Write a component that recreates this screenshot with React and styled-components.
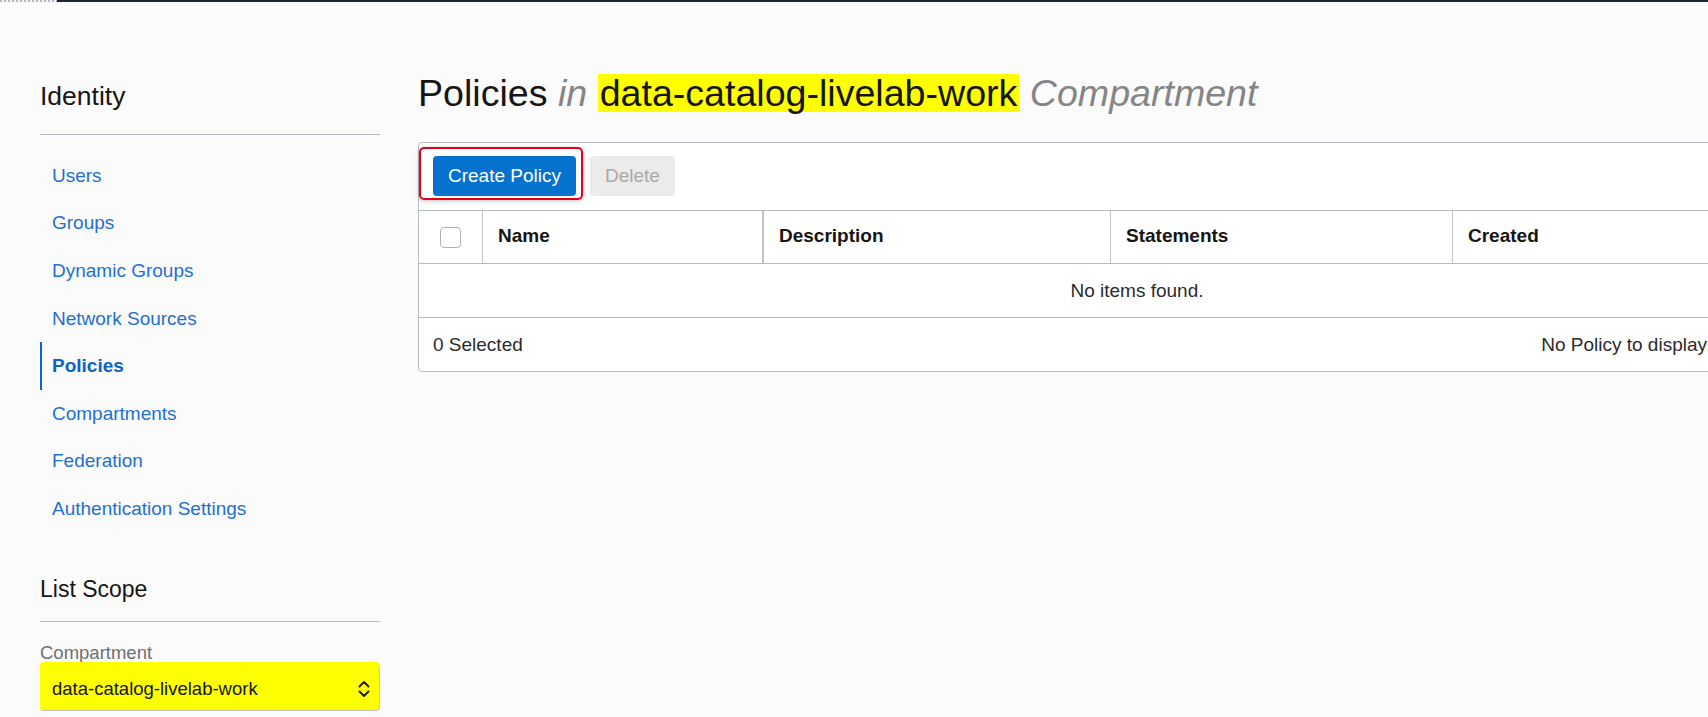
import React from 'react'
import styled, { createGlobalStyle } from 'styled-components'

const GlobalStyle = createGlobalStyle`
    body {
        margin: 0;
        background: #fbfbfb;
        font-family: "Liberation Sans", Arial, sans-serif;
        color: #161513;
        overflow: hidden;
    }
`

const navItems = [
    'Users',
    'Groups',
    'Dynamic Groups',
    'Network Sources',
    'Policies',
    'Compartments',
    'Federation',
    'Authentication Settings',
]

const columns = ['Name', 'Description', 'Statements', 'Created']

function Chevron() {
    return (
        <svg width="14" height="20" viewBox="0 0 14 20" fill="none">
            <path d="M2.5 7.5 L7 3 L11.5 7.5" stroke="#222" strokeWidth="2" strokeLinecap="round" strokeLinejoin="round" />
            <path d="M2.5 12.5 L7 17 L11.5 12.5" stroke="#222" strokeWidth="2" strokeLinecap="round" strokeLinejoin="round" />
        </svg>
    )
}

function App() {
    return (
        <Page>
            <GlobalStyle />
            <TopBar>
                <Dots />
            </TopBar>
            <Layout>
                <Sidebar>
                    <SideHeading size={26.5} lh={30} top={79} pad={23}>Identity</SideHeading>
                    <NavList>
                        {navItems.map((item) => (
                            <NavItem key={item} active={item === 'Policies'}>{item}</NavItem>
                        ))}
                    </NavList>
                    <SideHeading size={23} lh={28} top={42} pad={18}>List Scope</SideHeading>
                    <FieldLabel>Compartment</FieldLabel>
                    <SelectBox>
                        <span>data-catalog-livelab-work</span>
                        <Chevron />
                    </SelectBox>
                </Sidebar>
                <Main>
                    <Title>
                        Policies <Muted>in</Muted> <Mark>data-catalog-livelab-work</Mark> <Muted>Compartment</Muted>
                    </Title>
                    <Panel>
                        <Toolbar>
                            <Callout>
                                <Button primary>Create Policy</Button>
                            </Callout>
                            <Button disabled>Delete</Button>
                        </Toolbar>
                        <HeaderRow>
                            <CheckCell>
                                <Checkbox />
                            </CheckCell>
                            {columns.map((col) => (
                                <HeaderCell key={col} thick={col === 'Name'}>{col}</HeaderCell>
                            ))}
                        </HeaderRow>
                        <EmptyRow>No items found.</EmptyRow>
                        <Footer>
                            <span>0 Selected</span>
                            <span>No Policy to display</span>
                        </Footer>
                    </Panel>
                </Main>
            </Layout>
        </Page>
    )
}

const Page = styled.div`
    min-height: 717px;
    width: 1708px;
    overflow: hidden;
`

const TopBar = styled.div`
    height: 2px;
    background: #1e2632;
`

const Dots = styled.div`
    width: 57px;
    height: 2px;
    background: repeating-linear-gradient(90deg, #b9bdc3 0 2px, #eef0f2 2px 4px);
`

const Layout = styled.div`
    display: flex;
    padding-left: 40px;
`

const Sidebar = styled.aside`
    width: 340px;
    flex-shrink: 0;
    display: flex;
    flex-direction: column;
`

const SideHeading = styled.h2`
    margin: ${(p) => p.top}px 0 0;
    font-size: ${(p) => p.size}px;
    line-height: ${(p) => p.lh}px;
    font-weight: 400;
    color: #161513;
    padding-bottom: ${(p) => p.pad}px;
    border-bottom: 1px solid #b7bcc3;
`

const NavList = styled.nav`
    margin-top: 17px;
    display: flex;
    flex-direction: column;
`

const NavItem = styled.a`
    height: 47.6px;
    display: flex;
    align-items: center;
    padding-left: ${(p) => (p.active ? '10px' : '12px')};
    border-left: ${(p) => (p.active ? '2px solid #0a66c8' : 'none')};
    font-size: 19px;
    font-weight: ${(p) => (p.active ? 700 : 400)};
    color: ${(p) => (p.active ? '#0d63c4' : '#1f6fcf')};
    cursor: pointer;
`

const FieldLabel = styled.div`
    margin-top: 20px;
    font-size: 18.5px;
    line-height: 22px;
    color: #6f6f6f;
`

const SelectBox = styled.div`
    margin-top: 3px;
    height: 44px;
    box-sizing: border-box;
    display: flex;
    align-items: center;
    justify-content: space-between;
    padding: 0 8px 0 11px;
    background: #ffff00;
    border: 1px solid #c3c3c3;
    border-top-color: #ffff00;
    border-left-color: #ffff00;
    border-radius: 4px;
    box-shadow: 0 -5px 0 0 #ffff00;
    font-size: 18.5px;
    color: #161513;
`

const Main = styled.main`
    margin-left: 38px;
    display: flex;
    flex-direction: column;
    min-width: 0;
`

const Title = styled.h1`
    margin: 69px 0 0;
    font-size: 37.6px;
    line-height: 44px;
    font-weight: 400;
    color: #161513;
    white-space: nowrap;
`

const Muted = styled.em`
    color: #858585;
`

const Mark = styled.span`
    display: inline-block;
    line-height: 38px;
    padding: 0 2px 0 2px;
    background: #ffff00;
`

const Panel = styled.section`
    margin-top: 27px;
    width: 1436px;
    flex-shrink: 0;
    background: #fff;
    border: 1px solid #b7bcc3;
    border-radius: 4px;
`

const Toolbar = styled.div`
    display: flex;
    gap: 14px;
    padding: 13px 14px 14px;
`

const Callout = styled.span`
    position: relative;
    display: inline-flex;

    &::after {
        content: '';
        position: absolute;
        top: -9px;
        right: -7px;
        bottom: -4px;
        left: -14px;
        border: 2px solid #e3001b;
        border-radius: 5px;
        box-shadow: 0 1px 4px rgba(0, 0, 0, 0.25);
        pointer-events: none;
    }
`

const Button = styled.button`
    height: 40px;
    padding: 0 15px;
    border: none;
    border-radius: 4px;
    font-family: inherit;
    font-size: 19px;
    background: ${(p) => (p.primary ? '#0572ce' : '#ebebeb')};
    color: ${(p) => (p.primary ? '#fff' : '#a9a9a9')};
    cursor: ${(p) => (p.disabled ? 'default' : 'pointer')};
`

const HeaderRow = styled.div`
    display: grid;
    grid-template-columns: 64px 281px 347px 342px 1fr;
    height: 54px;
    box-sizing: border-box;
    border-top: 1px solid #b7bcc3;
    border-bottom: 1px solid #b7bcc3;
`

const CheckCell = styled.div`
    display: flex;
    align-items: center;
    justify-content: center;
    border-right: 1px solid #c4c8cd;
`

const Checkbox = styled.span`
    width: 21px;
    height: 21px;
    box-sizing: border-box;
    border: 1px solid #b2b2b2;
    border-radius: 4px;
    background: #fff;
`

const HeaderCell = styled.div`
    display: flex;
    align-items: center;
    padding-left: 15px;
    padding-bottom: 2px;
    font-size: 19px;
    font-weight: 700;
    color: #161513;
    border-right: ${(p) => (p.thick ? '2px solid #c0c4ca' : '1px solid #c4c8cd')};

    &:last-child {
        border-right: none;
    }
`

const EmptyRow = styled.div`
    height: 54px;
    box-sizing: border-box;
    display: flex;
    align-items: center;
    justify-content: center;
    border-bottom: 1px solid #b7bcc3;
    font-size: 19px;
    color: #2b2b2b;
`

const Footer = styled.div`
    height: 53px;
    display: flex;
    align-items: center;
    justify-content: space-between;
    padding: 0 148px 0 14px;
    font-size: 19px;
    color: #2b2b2b;
`

export default App
